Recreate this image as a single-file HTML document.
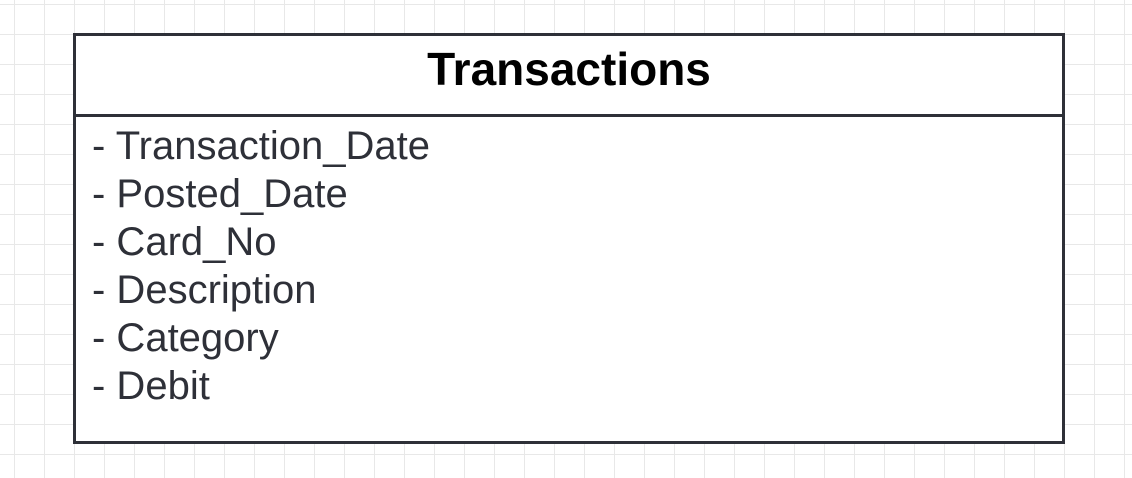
<!DOCTYPE html>
<html><head><style>
html,body{margin:0;padding:0;}
body{width:1132px;height:478px;overflow:hidden;position:relative;background-color:#fff;
background-image:linear-gradient(to right,#e8e8e8 1px,transparent 1px),linear-gradient(to bottom,#e8e8e8 1px,transparent 1px);
background-size:30px 30px;background-position:14px 4px;font-family:"Liberation Sans",sans-serif;}
.box{position:absolute;left:73px;top:33px;width:986px;height:405px;border:3px solid #2e3038;background:#fff;}
.hd{height:78px;border-bottom:3px solid #2e3038;text-align:center;font-weight:bold;font-size:46px;line-height:66px;color:#000;}
.items{padding:5px 0 0 16px;font-size:40px;line-height:48px;color:#2e3038;}
</style></head><body>
<div class="box"><div class="hd">Transactions</div>
<div class="items">- Transaction_Date<br>- Posted_Date<br>- Card_No<br>- Description<br>- Category<br>- Debit</div></div>
</body></html>
